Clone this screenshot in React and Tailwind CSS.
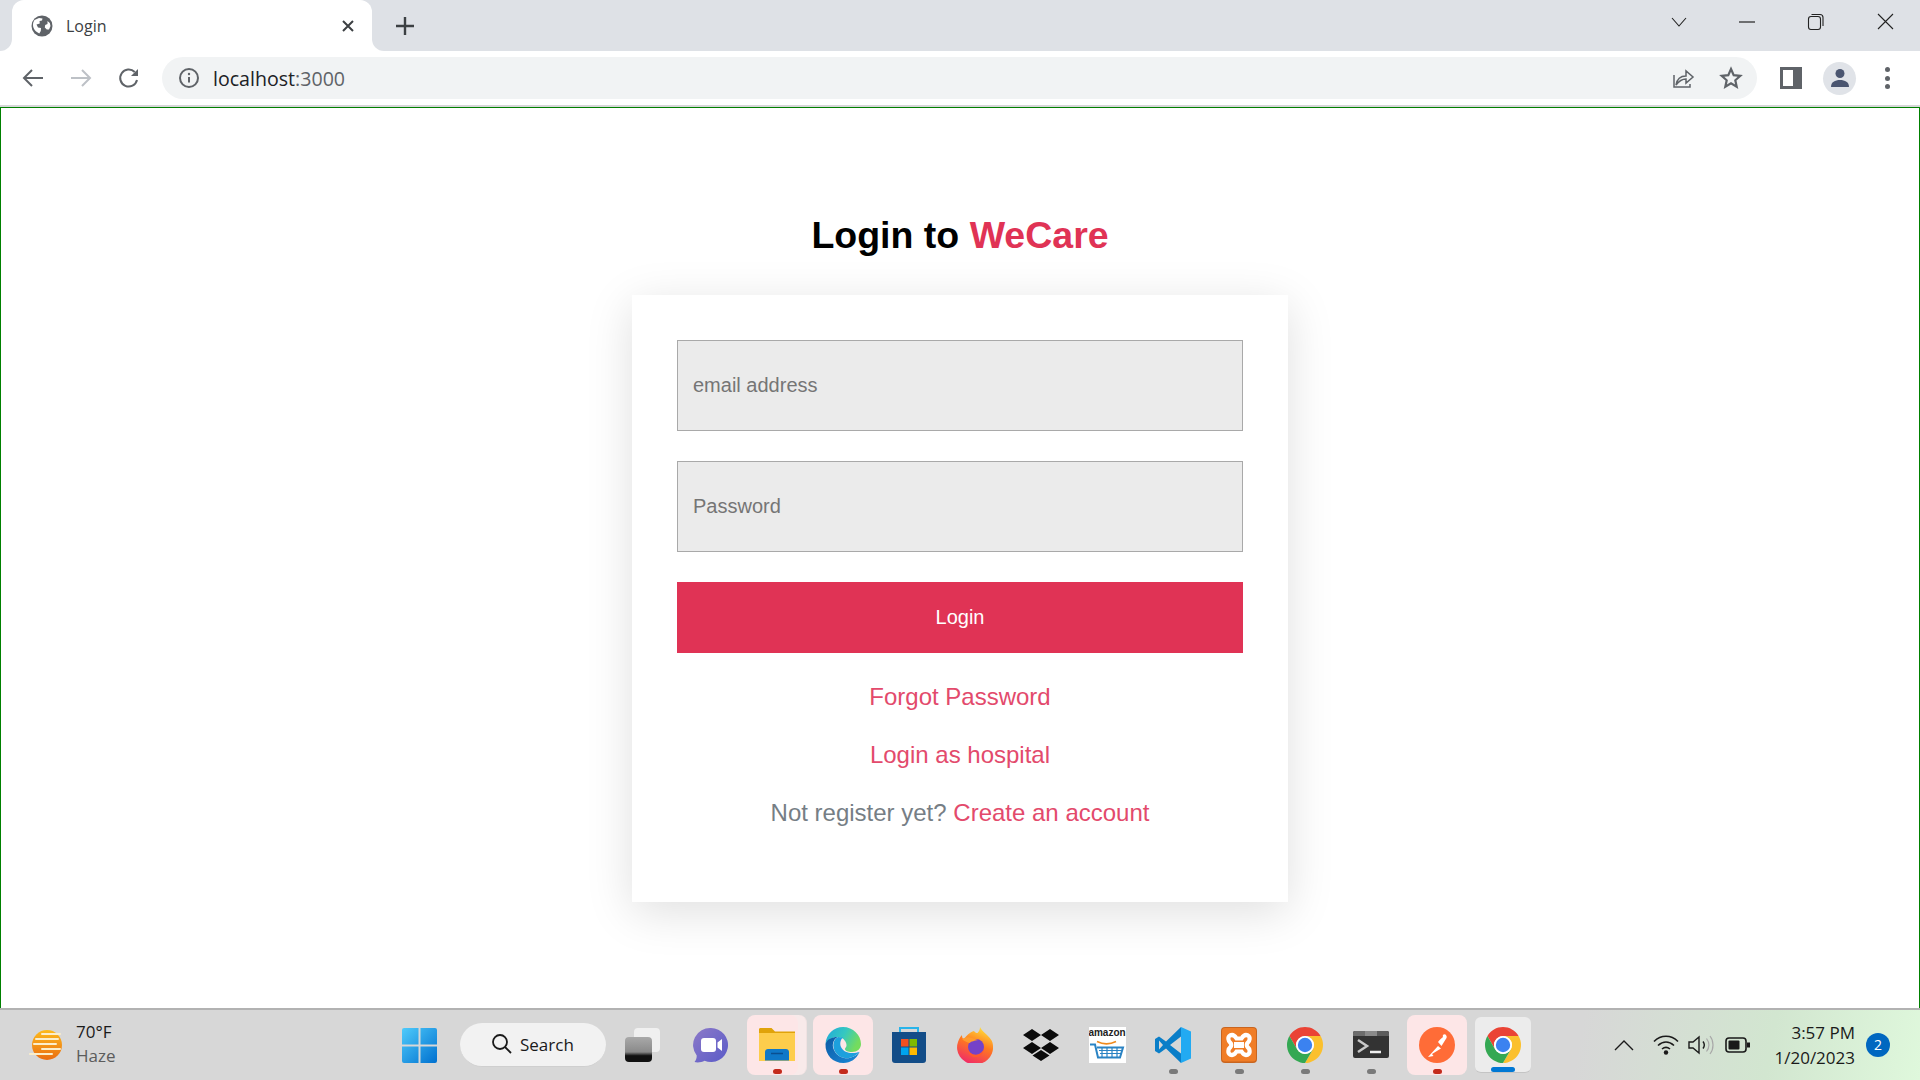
import React from "react";

const UI = { fontFamily: '"Open Sans", "Noto Sans", sans-serif' };
const PAGE = { fontFamily: '"Liberation Sans", Arial, sans-serif' };

function Svg({ s = 24, v = "0 0 24 24", children, className = "" }) {
  return (
    <svg width={s} height={s} viewBox={v} fill="none" className={className}>
      {children}
    </svg>
  );
}

function Globe() {
  return (
    <Svg s={22} v="0 0 22 22">
      <circle cx="11" cy="11" r="10.5" fill="#5f6368" />
      <path d="M3.500 5 8 3 11.500 3.500 11 5.500 8.500 6 8.800 8.500 5.500 9.500 7 12.500 10 13 9.800 16 8.300 18.500C5 17 2 14 2 10 2 8 2.500 6.500 3.500 5Z" fill="#fff" />
      <path d="M16.500 6 18.800 8 19.500 11 18 14.500 15.800 14.500 13.800 12.500 14.200 10 16.500 9Z" fill="#fff" />
    </Svg>
  );
}

function Chrome({ s = 36 }) {
  return (
    <Svg s={s} v="4 4 40 40">
      <path d="M6.68 14A20 20 0 0 1 41.32 14H24A10 10 0 0 0 15.34 29Z" fill="#ea4335" />
      <path d="M41.32 14A20 20 0 0 1 24 44L32.66 29A10 10 0 0 0 24 14Z" fill="#fbc02d" />
      <path d="M6.68 14A20 20 0 0 0 24 44L32.66 29A10 10 0 0 1 15.34 29Z" fill="#34a853" />
      <circle cx="24" cy="24" r="10" fill="#fff" />
      <circle cx="24" cy="24" r="8" fill="#3b82f0" />
    </Svg>
  );
}

function Edge() {
  return (
    <Svg s={36} v="0 0 36 36">
      <defs>
        <linearGradient id="e1" x1="0" y1="0" x2="1" y2="0.4">
          <stop offset="0" stopColor="#1fa7dd" />
          <stop offset="0.55" stopColor="#35c8c0" />
          <stop offset="1" stopColor="#74dc5e" />
        </linearGradient>
        <linearGradient id="e2" x1="0" y1="0" x2="1" y2="1">
          <stop offset="0" stopColor="#0c59a4" />
          <stop offset="1" stopColor="#1b8ad8" />
        </linearGradient>
      </defs>
      <path d="M.5 17C1 7 9 0 18 0c10 0 18 8 18 17 0 5-4 8-9 8-4 0-7-1-7-3 0-1 1-1.500 1.500-3C22 16 19 10 13 10 7 10 2 13 .5 17Z" fill="url(#e1)" />
      <path d="M.5 17C2 12 7 10 12.500 10c-5 3-6 9-3 14 3 6 10 8 15 7 4-1 8-3 10-6-3 7-9 11-16 11C8 36 0 28 .5 17Z" fill="url(#e2)" />
      <path d="M13 10c-5 2.500-6 9-3 14.500 2.500 5 9 7.500 14 6.500 4-.7 8-3 10.500-6-2 .5-4 1-7.500 1-4 0-9-1.500-11-6-1.500-3.500-.5-7.500 2-9.500Z" fill="#1da0dd" />
    </Svg>
  );
}

function Explorer() {
  return (
    <Svg s={36} v="0 0 36 36">
      <path d="M0 2.500C0 1.500.7 1 1.500 1h11l3.500 3.500h20V8H0Z" fill="#e0a30a" />
      <path d="M0 6h36v28H0Z" fill="#fdcd4c" />
      <path d="M6 33V25c0-2 1.500-3 3-3h18c1.500 0 3 1 3 3v8.500H6Z" fill="#0f78c8" />
      <path d="M12 26.500h12" stroke="#0a4f90" strokeWidth="1.500" />
    </Svg>
  );
}

function Chat() {
  return (
    <Svg s={36} v="0 0 36 36">
      <defs>
        <linearGradient id="c1" x1="0" y1="0" x2="1" y2="1">
          <stop offset="0" stopColor="#8c79c8" />
          <stop offset="1" stopColor="#5a5bc8" />
        </linearGradient>
      </defs>
      <path d="M18 1a17 17 0 1 1-6.500 32.700C9 35 5 36 1.500 35c1.500-2 2.300-3.800 2.200-6.500A17 17 0 0 1 18 1Z" fill="url(#c1)" />
      <rect x="8" y="11" width="15" height="14" rx="3" fill="#fff" />
      <path d="M24.500 15.500 29 12v12l-4.500-3.500Z" fill="#fff" />
    </Svg>
  );
}

function Store() {
  return (
    <Svg s={36} v="0 0 36 36">
      <path d="M9 5V1h18v4" stroke="#28b4ea" strokeWidth="2" />
      <path d="M1 5h34v28a3 3 0 0 1-3 3H4a3 3 0 0 1-3-3Z" fill="#134d88" />
      <rect x="10" y="12" width="7.500" height="7.500" fill="#f25022" />
      <rect x="18.500" y="12" width="7.500" height="7.500" fill="#7fba00" />
      <rect x="10" y="20.500" width="7.500" height="7.500" fill="#00a4ef" />
      <rect x="18.500" y="20.500" width="7.500" height="7.500" fill="#ffb900" />
    </Svg>
  );
}

function Firefox() {
  return (
    <Svg s={36} v="0 0 36 36">
      <defs>
        <linearGradient id="f1" x1="0.7" y1="0" x2="0.3" y2="1">
          <stop offset="0" stopColor="#ffe03b" />
          <stop offset="0.45" stopColor="#ff7a1f" />
          <stop offset="1" stopColor="#f0286a" />
        </linearGradient>
      </defs>
      <path d="M23 0c1 3 4 5 7 8 3 3 6 6 6 11a18 17 0 1 1-35-4c1-3 2-5 4-7 0 2 .5 3.500 2 4.500C9 9 13 5 17 4c1 1.500 2 2 3.500 2C22 4.500 23 3 23 0Z" fill="url(#f1)" />
      <circle cx="19" cy="20" r="8" fill="#7542c8" />
      <path d="M5 12c3-2 7-2 10-1l6 2c-3 1-7 1-8 3-3-.5-6-2-8-4Z" fill="#ff9a2e" />
      <path d="M11 23c2 4 7 6 11 4 2-1 4-3 5-5-1 6-6 9-10 8-4-.5-6-4-6-7Z" fill="#ff5a2e" />
    </Svg>
  );
}

function Dropbox() {
  return (
    <Svg s={36} v="0 0 36 32">
      <path d="M9 0 18 6 9 12 0 6ZM27 0l9 6-9 6-9-6ZM9 13l9 6-9 6-9-6ZM27 13l9 6-9 6-9-6ZM18 21l8.500 5.500L18 32l-8.500-5.500Z" fill="#0b0b0b" />
    </Svg>
  );
}

function Amazon() {
  return (
    <div className="w-[37px] h-[36px] bg-white flex flex-col items-center overflow-hidden">
      <span className="text-[10px] font-bold leading-[11px] text-[#222]" style={PAGE}>amazon</span>
      <Svg s={36} v="0 0 36 24">
        <path d="M8 3c6 3 13 3 19 0" stroke="#f08a1d" strokeWidth="1.500" />
        <path d="M1 6h5l3 13h22l3-10H8" stroke="#2a83c4" strokeWidth="2" />
        <path d="M10 12h23M11 15h21M13 9v10M18 9v10M23 9v10M28 9v10" stroke="#2a83c4" strokeWidth="1.200" />
      </Svg>
    </div>
  );
}

function VSCode() {
  return (
    <Svg s={36} v="0 0 36 36">
      <path
        fillRule="evenodd"
        d="M26 0 11 14.500 4 9.500 0 12v12l4 2.500 7-5L26 36V0ZM26 9.500 15 18l11 8.500ZM4 13.500 8 18l-4 4.500Z"
        fill="#0a7ec8"
      />
      <path d="M26 0 36 4.500V31.500L26 36Z" fill="#22aaf2" />
    </Svg>
  );
}

function Xampp() {
  return (
    <Svg s={36} v="0 0 36 36">
      <rect width="36" height="36" rx="4" fill="#c9651f" />
      <rect x="1" y="1" width="34" height="33.500" rx="3" fill="#f07d26" />
      <path d="M9 8.500c3-1.500 5 .5 6.500 3h5c1.500-2.500 3.500-4.500 6.500-3 2.500 1.500 2 5.500-.5 7.500-1 .8-1 3.200 0 4 2.500 2 3 6 .5 7.500-3 1.500-5-.5-6.500-3h-5c-1.500 2.500-3.500 4.500-6.500 3-2.500-1.500-2-5.500.5-7.500 1-.8 1-3.200 0-4C7 14 6.500 10 9 8.500Z" stroke="#fff" strokeWidth="4.200" />
      <path d="M13 16.500h10M13 19.500h10" stroke="#fff" strokeWidth="2.800" />
    </Svg>
  );
}

function Terminal() {
  return (
    <Svg s={36} v="0 0 36 28">
      <rect width="36" height="27" rx="2" fill="#333" />
      <path d="M0 2a2 2 0 0 1 2-2h10v5H0Z" fill="#6c6c6c" />
      <rect x="12" width="12" height="5" fill="#8a8a8a" />
      <path d="M24 0h10a2 2 0 0 1 2 2v3H24Z" fill="#5c5c5c" />
      <path d="M5 9l9 6-9 6" stroke="#c8c8c8" strokeWidth="2.500" />
      <path d="M17 21h11" stroke="#f0f0f0" strokeWidth="2.500" />
    </Svg>
  );
}

function Postman() {
  return (
    <Svg s={36} v="0 0 36 36">
      <circle cx="18" cy="18" r="18" fill="#ff6c37" />
      <path d="M9 30 19 19l3 2.500L13 27l1.500 2Z" fill="#fff" />
      <path d="M19 15c2-3 5-5 7-6.500 1.500-.5 2 1 1.500 2.500L22.500 19Z" fill="#fff" />
      <circle cx="25.500" cy="9" r="1.800" fill="#fff" />
    </Svg>
  );
}

function Cell({ children, tile, dot, active, stack }) {
  return (
    <div className="relative w-[66px] h-[60px] shrink-0 flex items-center justify-center">
      {stack && <div className="absolute left-[10px] right-[3px] top-0 bottom-0 rounded-lg bg-[#f8eaea] border-r border-[#f0e2e2]" />}
      {tile && <div className="absolute left-[3px] top-0 w-[60px] h-[60px] rounded-lg bg-[#fde6e7]" />}
      {stack && <div className="absolute left-[3px] top-0 w-[51px] h-[60px] rounded-lg bg-[#fde6e7]" />}
      {active && <div className="absolute left-[5px] top-[2px] w-[56px] h-[56px] rounded-md bg-[#ececec] border-b border-[#c4c4c4]" />}
      <div className="relative flex items-center justify-center">{children}</div>
      {dot && (
        <div
          className={
            dot === "red"
              ? "absolute bottom-[1px] w-[9px] h-[5px] rounded-full bg-[#c42b1c]"
              : dot === "blue"
              ? "absolute bottom-[3px] w-[24px] h-[5px] rounded-full bg-[#0078d4]"
              : "absolute bottom-[1px] w-[9px] h-[5px] rounded-full bg-[#7a7a7a]"
          }
        />
      )}
    </div>
  );
}

export default function App() {
  return (
    <div className="w-[1920px] h-[1080px] overflow-hidden flex flex-col bg-white" style={UI}>
      {/* tab strip */}
      <div className="h-[51px] shrink-0 bg-[#dee1e6] flex items-end pl-[12px] relative">
        <div className="relative w-[360px] h-[51px] bg-white rounded-t-[12px] flex items-center pl-[19px] pr-[17px]">
          <div className="absolute -left-[12px] bottom-0 w-[12px] h-[12px] bg-white" />
          <div className="absolute -left-[12px] bottom-0 w-[12px] h-[12px] bg-[#dee1e6] rounded-br-[12px]" />
          <div className="absolute -right-[12px] bottom-0 w-[12px] h-[12px] bg-white" />
          <div className="absolute -right-[12px] bottom-0 w-[12px] h-[12px] bg-[#dee1e6] rounded-bl-[12px]" />
          <Globe />
          <span className="ml-[13px] text-[16px] leading-none text-[#3c4043]">Login</span>
          <svg className="ml-auto" width="14" height="14" viewBox="0 0 14 14">
            <path d="M2 2l10 10M12 2 2 12" stroke="#3c4043" strokeWidth="2" />
          </svg>
        </div>
        <svg className="ml-[23px] mb-[15px]" width="20" height="20" viewBox="0 0 20 20">
          <path d="M10 1v18M1 10h18" stroke="#3c4043" strokeWidth="2.400" />
        </svg>
        <div className="ml-auto h-[51px] flex items-start pt-[12px] pr-[26px]">
          <svg width="18" height="20" viewBox="0 0 18 20"><path d="M2 6l7 8 7-8" stroke="#222" strokeWidth="1.100" fill="none" /></svg>
          <svg className="ml-[50px]" width="18" height="20" viewBox="0 0 18 20"><path d="M1 10h16" stroke="#222" strokeWidth="1.200" /></svg>
          <svg className="ml-[51px]" width="18" height="20" viewBox="0 0 18 20" fill="none"><rect x="1.500" y="4.500" width="12" height="13" rx="2.500" stroke="#222" strokeWidth="1.100" /><path d="M4.500 2.500h8.500a3 3 0 0 1 3 3V14" stroke="#222" strokeWidth="1.100" /></svg>
          <svg className="ml-[51px]" width="18" height="20" viewBox="0 0 18 20"><path d="M2 2l15 15M17 2 2 17" stroke="#222" strokeWidth="1.100" /></svg>
        </div>
      </div>

      {/* toolbar */}
      <div className="h-[54px] shrink-0 bg-white flex items-center pl-[20px]">
        <svg width="26" height="24" viewBox="0 0 26 24" fill="none"><path d="M23 12H4M12 4l-8 8 8 8" stroke="#5f6368" strokeWidth="2" /></svg>
        <svg className="ml-[22px]" width="26" height="24" viewBox="0 0 26 24" fill="none"><path d="M3 12h19M14 4l8 8-8 8" stroke="#bdc1c6" strokeWidth="2" /></svg>
        <svg className="ml-[23px]" width="24" height="24" viewBox="0 0 24 24" fill="none"><path d="M20 14a8.500 8.500 0 1 1-2.300-8" stroke="#5f6368" strokeWidth="2" /><path d="M21 3v7h-7Z" fill="#5f6368" /></svg>
        <div className="ml-[21px] w-[1595px] h-[42px] rounded-full bg-[#f1f3f4] flex items-center pl-[17px] pr-[14px]">
          <svg width="20" height="20" viewBox="0 0 20 20" fill="none"><circle cx="10" cy="10" r="9" stroke="#5f6368" strokeWidth="2" /><path d="M10 9v5.500" stroke="#5f6368" strokeWidth="2" /><circle cx="10" cy="6" r="1.200" fill="#5f6368" /></svg>
          <span className="ml-[14px] text-[19.6px] leading-none text-[#202124] translate-y-[1px]">localhost<span className="text-[#5f6368]">:3000</span></span>
          <svg className="ml-auto" width="24" height="24" viewBox="0 0 24 24" fill="none"><path d="M3 9v12h16v-3M5 19c1-6 5-9 10-9V5l7 6-7 6v-4c-4 0-7 2-10 6Z" stroke="#5f6368" strokeWidth="1.500" /></svg>
          <svg className="ml-[24px]" width="24" height="24" viewBox="0 0 24 24" fill="none"><path d="M12 3l2.700 6.100 6.600.7-5 4.500 1.400 6.500L12 17.400 6.300 20.800l1.400-6.500-5-4.500 6.600-.7Z" stroke="#5f6368" strokeWidth="2.200" /></svg>
        </div>
        <svg className="ml-[23px]" width="22" height="22" viewBox="0 0 22 22"><rect width="22" height="22" fill="#5f6368" /><rect x="3" y="3" width="10" height="16" fill="#fff" /></svg>
        <div className="ml-[21px] w-[33px] h-[33px] rounded-full bg-[#e0e3e8] flex items-center justify-center">
          <svg width="20" height="20" viewBox="0 0 20 20"><circle cx="10" cy="5.500" r="4.500" fill="#4a5570" /><path d="M1 19c0-5 4-7 9-7s9 2 9 7Z" fill="#4a5570" /></svg>
        </div>
        <div className="ml-[29px] flex flex-col gap-[3.5px]">
          <div className="w-[5px] h-[5px] rounded-full bg-[#5f6368]" />
          <div className="w-[5px] h-[5px] rounded-full bg-[#5f6368]" />
          <div className="w-[5px] h-[5px] rounded-full bg-[#5f6368]" />
        </div>
      </div>

      <div className="h-[2px] shrink-0 bg-[#d6d7d8]" />

      {/* page */}
      <div className="flex-1 border border-b-0 border-[#008000] flex flex-col items-center" style={PAGE}>
        <h1 className="mt-[103px] h-[48px] text-[37.5px] leading-[48px] font-bold text-black">
          Login to <span className="text-[#e03355]">WeCare</span>
        </h1>
        <div className="mt-[36px] w-[656px] h-[607px] bg-white p-[45px] shadow-[0_10px_44px_rgba(0,0,0,0.13)] flex flex-col">
          <div className="h-[91px] bg-[#ebebeb] border border-[#a9a9a9] flex items-center pl-[15px] pb-[2px] text-[20px] text-[#757575]">email address</div>
          <div className="mt-[30px] h-[91px] bg-[#ebebeb] border border-[#a9a9a9] flex items-center pl-[15px] pb-[2px] text-[20px] text-[#757575]">Password</div>
          <div className="mt-[30px] h-[71px] bg-[#e03355] flex items-center justify-center pb-[2px] text-[20px] text-white">Login</div>
          <div className="mt-[26px] h-[36px] leading-[36px] text-center text-[24px] text-[#e34a6c]">Forgot Password</div>
          <div className="mt-[22px] h-[36px] leading-[36px] text-center text-[24px] text-[#e34a6c]">Login as hospital</div>
          <div className="mt-[22px] h-[36px] leading-[36px] text-center text-[24px] text-[#767e85]">
            Not register yet? <span className="text-[#e34a6c]">Create an account</span>
          </div>
        </div>
      </div>

      {/* taskbar */}
      <div className="h-[72px] shrink-0 border-t-2 border-[#b2b2b2] bg-[#d7d7d7] bg-[linear-gradient(100deg,#d7d7d7_0%,#d7d7d7_82%,#d2e6d0_92%,#dff8dc_100%)] flex items-center relative">
        <div className="w-[402px] shrink-0 flex items-center pl-[28px]">
          <svg width="38" height="38" viewBox="0 0 38 38">
            <defs>
              <linearGradient id="w1" x1="0" y1="0" x2="0" y2="1">
                <stop offset="0" stopColor="#fdbb1d" />
                <stop offset="1" stopColor="#ea6d12" />
              </linearGradient>
            </defs>
            <circle cx="19" cy="19" r="15" fill="url(#w1)" />
            <path d="M14 8h18M8 13h22M6 18h22M14 23h18M2 28h22" stroke="#fbeecb" strokeWidth="2" strokeLinecap="round" />
          </svg>
          <div className="ml-[10px] flex flex-col -mt-[2px]">
            <span className="text-[17px] leading-[24px] text-[#1a1a1a]">70°F</span>
            <span className="text-[17px] leading-[24px] text-[#5c5c5c]">Haze</span>
          </div>
        </div>
        <svg width="35" height="35" viewBox="0 0 35 35">
          <defs>
            <linearGradient id="w2" x1="0" y1="0" x2="1" y2="1">
              <stop offset="0" stopColor="#4fcbfb" />
              <stop offset="1" stopColor="#0070cf" />
            </linearGradient>
          </defs>
          <path d="M0 2a2 2 0 0 1 2-2h14.500v16.500H0ZM18.500 0H33a2 2 0 0 1 2 2v14.500H18.500ZM0 18.500h16.500V35H2a2 2 0 0 1-2-2ZM18.500 18.500H35V33a2 2 0 0 1-2 2H18.500Z" fill="url(#w2)" />
        </svg>
        <div className="ml-[23px] w-[146px] h-[44px] rounded-full bg-[#f2f2f2] border-b border-[#cfcfcf] flex items-center pl-[31px] -mt-[1px]">
          <svg width="22" height="22" viewBox="0 0 22 22" fill="none"><circle cx="9" cy="9" r="7" stroke="#1a1a1a" strokeWidth="1.800" /><path d="M14 14l6 6" stroke="#1a1a1a" strokeWidth="1.800" /></svg>
          <span className="ml-[7px] text-[17px] leading-none text-[#1a1a1a]">Search</span>
        </div>
        <div className="ml-[6px] flex items-center -mt-[1px]">
          <Cell>
            <div className="relative w-[35px] h-[34px] -translate-x-[3px]">
              <div className="absolute right-0 top-0 w-[26px] h-[24px] rounded-sm bg-[#f0f0f0]" />
              <div className="absolute left-0 bottom-0 w-[27px] h-[25px] rounded-sm bg-[linear-gradient(#a9a9a9,#8a8a8a_60%,#111_75%)]" />
            </div>
          </Cell>
          <Cell><Chat /></Cell>
          <Cell tile={false} stack dot="red"><Explorer /></Cell>
          <Cell tile dot="red"><Edge /></Cell>
          <Cell><Store /></Cell>
          <Cell><Firefox /></Cell>
          <Cell><Dropbox /></Cell>
          <Cell><Amazon /></Cell>
          <Cell dot="gray"><VSCode /></Cell>
          <Cell dot="gray"><Xampp /></Cell>
          <Cell dot="gray"><Chrome /></Cell>
          <Cell dot="gray"><Terminal /></Cell>
          <Cell tile dot="red"><Postman /></Cell>
          <Cell active dot="blue"><Chrome /></Cell>
        </div>
        <div className="ml-auto flex items-center pr-[30px] -mt-[1px]">
          <svg width="20" height="12" viewBox="0 0 20 12" fill="none"><path d="M1 11l9-9 9 9" stroke="#1a1a1a" strokeWidth="1.400" /></svg>
          <svg className="ml-[19px]" width="26" height="20" viewBox="0 0 26 20" fill="none">
            <path d="M1 6.500C8-.5 18-.5 25 6.500M5 10.500c5-4.500 11-4.500 16 0M9 14c3-2.500 5-2.500 8 0" stroke="#1a1a1a" strokeWidth="1.600" />
            <circle cx="13" cy="17.500" r="2.200" fill="#1a1a1a" />
          </svg>
          <svg className="ml-[9px]" width="26" height="20" viewBox="0 0 26 20" fill="none">
            <path d="M1 7h4l6-5v16l-6-5H1Z" stroke="#1a1a1a" strokeWidth="1.400" />
            <path d="M15 6.500c1.500 2 1.500 5 0 7" stroke="#1a1a1a" strokeWidth="1.400" />
            <path d="M18.500 3.500c3 4 3 9 0 13M22 1c4 5 4 13 0 18" stroke="#a8a8a8" strokeWidth="1.200" />
          </svg>
          <svg className="ml-[11px]" width="25" height="16" viewBox="0 0 25 16" fill="none">
            <rect x="1" y="1" width="20" height="14" rx="3" stroke="#1a1a1a" strokeWidth="1.600" />
            <rect x="3.500" y="3.500" width="11" height="9" rx="1" fill="#1a1a1a" />
            <rect x="22" y="5.500" width="3" height="5" fill="#1a1a1a" />
          </svg>
          <div className="ml-[20px] flex flex-col items-end w-[85px]">
            <span className="text-[17px] leading-[25px] text-[#1a1a1a] whitespace-nowrap">3:57 PM</span>
            <span className="text-[17px] leading-[25px] text-[#1a1a1a] whitespace-nowrap">1/20/2023</span>
          </div>
          <div className="ml-[11px] w-[24px] h-[24px] rounded-full bg-[#0067c0] flex items-center justify-center text-[14px] leading-none text-white">2</div>
        </div>
      </div>
    </div>
  );
}
